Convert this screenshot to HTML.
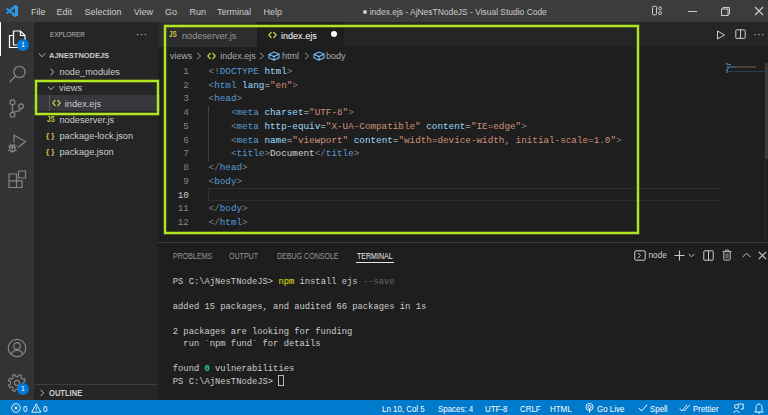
<!DOCTYPE html>
<html><head><meta charset="utf-8">
<style>
*{margin:0;padding:0;box-sizing:border-box}
html,body{width:768px;height:415px;overflow:hidden;background:#1e1e1e;font-family:"Liberation Sans",sans-serif;color:#cccccc}
.a{position:absolute;white-space:pre}
.m{font-family:"Liberation Mono",monospace}
#title{left:0;top:0;width:768px;height:22px;background:#3c3c3c}
#act{left:0;top:22px;width:34px;height:378px;background:#333333}
#side{left:34px;top:22px;width:124px;height:378px;background:#252526}
#tabs{left:158px;top:22px;width:610px;height:25px;background:#252526}
#status{left:0;top:400px;width:768px;height:15px;background:#007acc}
.menu{top:5.6px;height:13px;line-height:13px;font-size:9px;color:#cccccc}
.row{font-size:9.2px;height:16px;line-height:16px;color:#cccccc}
.code{font-size:9.31px;line-height:13.76px;height:13.76px;left:208.6px;color:#d4d4d4}
.ln{font-size:9.31px;line-height:13.76px;height:13.76px;left:164px;width:24.8px;text-align:right;color:#858585}
.t{color:#808080}.n{color:#569cd6}.at{color:#9cdcfe}.s{color:#ce9178}
.term{font-size:8.8px;line-height:12.5px;height:12.5px;left:172.8px;color:#cccccc}
.st{top:401.8px;height:14px;line-height:14px;font-size:8.8px;color:#ffffff;transform:scaleX(0.9);transform-origin:0 0}
.ptab{top:249.5px;height:13px;line-height:13px;font-size:8.2px;color:#969696;transform:scaleX(0.862);transform-origin:0 0}
.g{position:absolute;border:2px solid #aee622;box-shadow:0 0 0.8px 0.4px rgba(174,230,34,0.55),inset 0 0 0.8px 0.4px rgba(174,230,34,0.55)}
</style></head><body>
<div class="a" id="title"></div>
<div class="a" id="act"></div>
<div class="a" id="side"></div>
<div class="a" id="tabs"></div>

<!-- title bar -->
<svg class="a" style="left:6.3px;top:5px" width="12" height="12" viewBox="0 0 100 100">
<path fill="#2a8fd8" fill-rule="evenodd" d="M96.5 10.8L75.9 0.9C73.5-0.3 70.6 0.2 68.8 2.1L29.3 38.1L12.1 25.1C10.5 23.9 8.3 24 6.8 25.3L1.3 30.3C-0.5 32-0.5 34.8 1.3 36.5L16.2 50L1.3 63.6C-0.5 65.3-0.5 68.1 1.3 69.8L6.8 74.8C8.3 76.1 10.5 76.2 12.1 75L29.3 62L68.8 98C70.6 99.8 73.5 100.3 75.9 99.2L96.5 89.3C98.6 88.3 100 86.1 100 83.7V16.3C100 14 98.6 11.8 96.5 10.8ZM75 27.3L45.1 50L75 72.7Z"/>
<path fill="#3aa3f0" d="M75.9 0.9L96.5 10.8C98.6 11.8 100 14 100 16.3V83.7C100 86.1 98.6 88.3 96.5 89.3L75.9 99.2L75 72.7V27.3Z" opacity="0.6"/>
</svg>
<div class="a menu" style="left:31px">File</div>
<div class="a menu" style="left:56.5px">Edit</div>
<div class="a menu" style="left:84.5px">Selection</div>
<div class="a menu" style="left:133.7px">View</div>
<div class="a menu" style="left:165px">Go</div>
<div class="a menu" style="left:189.5px">Run</div>
<div class="a menu" style="left:217px">Terminal</div>
<div class="a menu" style="left:263.5px">Help</div>
<div class="a" style="left:362.6px;top:9.7px;width:4.4px;height:4.4px;border-radius:50%;background:#cccccc"></div>
<div class="a menu" style="left:369.7px;font-size:8.45px">index.ejs - AjNesTNodeJS - Visual Studio Code</div>
<!-- window controls -->
<svg class="a" style="left:651px;top:5px" width="13" height="11" viewBox="0 0 13 11" fill="none" stroke="#cccccc" stroke-width="1"><rect x="1.5" y="1.3" width="4" height="8.5" rx="1"/><circle cx="9.1" cy="3.4" r="1.5"/><circle cx="9.1" cy="8.1" r="1.5"/></svg>
<div class="a" style="left:688px;top:10.5px;width:9px;height:1px;background:#cccccc"></div>
<svg class="a" style="left:720px;top:6px" width="11" height="10" viewBox="0 0 11 10" fill="none" stroke="#cccccc" stroke-width="1">
<rect x="1.5" y="3" width="6.5" height="6.5"/><path d="M3 3V1.5H9.5V8H8"/></svg>
<svg class="a" style="left:754px;top:6px" width="10" height="10" viewBox="0 0 10 10" stroke="#cccccc" stroke-width="1.1">
<path d="M1 1L9 9M9 1L1 9"/></svg>

<!-- activity bar -->
<div class="a" style="left:0;top:22px;width:1px;height:34px;background:#ffffff"></div>
<svg class="a" style="left:8px;top:30px" width="20" height="20" viewBox="0 0 20 20" fill="none" stroke="#ffffff" stroke-width="1.2">
<path d="M5.5 5.5H1.5V17.5H11.5V15"/><path d="M5.5 1H12.5L17 5.5V15H5.5Z"/><path d="M12.5 1V5.5H17"/></svg>
<div class="a" style="left:17px;top:38.7px;width:12px;height:12px;border-radius:50%;background:#0078d4;color:#fff;font-size:7.5px;line-height:12px;text-align:center">1</div>
<svg class="a" style="left:7px;top:64px" width="21" height="21" viewBox="0 0 21 21" fill="none" stroke="#858585" stroke-width="1.3">
<circle cx="12.5" cy="8" r="5.6"/><path d="M8.5 12L2.4 18.4"/></svg>
<svg class="a" style="left:8px;top:97px" width="18" height="22" viewBox="0 0 18 22" fill="none" stroke="#858585" stroke-width="1.2">
<circle cx="4.5" cy="5.3" r="2.4"/><circle cx="13" cy="9.2" r="2.4"/><circle cx="4.5" cy="17.8" r="2.4"/>
<path d="M4.5 7.7V15.4"/><path d="M13 11.6C13 14 10 14.5 4.5 15.4"/></svg>
<svg class="a" style="left:7px;top:134px" width="20" height="20" viewBox="0 0 20 20" fill="none" stroke="#858585" stroke-width="1.2">
<path d="M7 8.5V1.2L18.5 7.5L11 13.5"/><ellipse cx="5.4" cy="14.6" rx="2.8" ry="3.3"/><path d="M2.6 13.5H8.2M5.4 12V18M1 12H2.6M1 16.5H2.6M8.2 12H9.8M8.2 16.5H9.8M3.2 10L4.2 11.2M7.6 10L6.6 11.2"/></svg>
<svg class="a" style="left:7.5px;top:169.5px" width="19" height="19" viewBox="0 0 19 19" fill="none" stroke="#858585" stroke-width="1.2">
<path d="M1 4H8.5V17.5H1ZM1 10.8H14V17.5H8.5M10.5 1H17.5V8H10.5Z"/></svg>
<svg class="a" style="left:7px;top:338px" width="20" height="20" viewBox="0 0 20 20" fill="none" stroke="#858585" stroke-width="1.2"><circle cx="10" cy="10" r="8.7"/><circle cx="10" cy="8" r="3.3"/><path d="M4.3 16.2C5 13.4 7.2 12.3 10 12.3C12.8 12.3 15 13.4 15.7 16.2"/></svg>
<svg class="a" style="left:6.8px;top:372.6px" width="20" height="20" viewBox="0 0 20 20" fill="none" stroke="#858585" stroke-width="1.15" stroke-linejoin="round"><path d="M16.41 11.07 L18.46 12.03 L17.42 14.55 L15.29 13.77 L13.77 15.29 L14.55 17.42 L12.03 18.46 L11.07 16.41 L8.93 16.41 L7.97 18.46 L5.45 17.42 L6.23 15.29 L4.71 13.77 L2.58 14.55 L1.54 12.03 L3.59 11.07 L3.59 8.93 L1.54 7.97 L2.58 5.45 L4.71 6.23 L6.23 4.71 L5.45 2.58 L7.97 1.54 L8.93 3.59 L11.07 3.59 L12.03 1.54 L14.55 2.58 L13.77 4.71 L15.29 6.23 L17.42 5.45 L18.46 7.97 L16.41 8.93Z"/><circle cx="10" cy="10" r="2.6"/></svg>
<div class="a" style="left:16.8px;top:382.8px;width:12px;height:12px;border-radius:50%;background:#0078d4;color:#fff;font-size:7.5px;line-height:12px;text-align:center">1</div>

<!-- sidebar -->
<div class="a" style="left:49.5px;top:29.2px;height:12px;line-height:12px;font-size:7.9px;color:#bbbbbb;transform:scaleX(0.81);transform-origin:0 0">EXPLORER</div>
<div class="a" style="left:136px;top:28.5px;font-size:10px;color:#cccccc;letter-spacing:0.5px">···</div>
<svg class="a" style="left:38px;top:51px" width="8" height="8" viewBox="0 0 8 8" fill="none" stroke="#cccccc" stroke-width="0.9"><path d="M0.8 2.5L4 5.7L7.2 2.5"/></svg>
<div class="a" style="left:48.8px;top:49.6px;height:12px;line-height:12px;font-size:8.1px;font-weight:bold;color:#cccccc;transform:scaleX(0.92);transform-origin:0 0">AJNESTNODEJS</div>
<svg class="a" style="left:47.5px;top:67.5px" width="8" height="8" viewBox="0 0 8 8" fill="none" stroke="#cccccc" stroke-width="0.9"><path d="M2.5 0.8L5.7 4L2.5 7.2"/></svg>
<div class="a row" style="left:59.6px;top:63.5px">node_modules</div>
<!-- views row -->
<div class="a" style="left:34px;top:95.3px;width:126px;height:16.2px;background:#37373d"></div>
<div class="a" style="left:49px;top:95.3px;width:1px;height:16.2px;background:#585858"></div>
<svg class="a" style="left:47px;top:83.6px" width="8" height="8" viewBox="0 0 8 8" fill="none" stroke="#cccccc" stroke-width="0.9"><path d="M0.8 2.5L4 5.7L7.2 2.5"/></svg>
<div class="a row" style="left:59.1px;top:80.1px">views</div>
<svg class="a" style="left:52px;top:99.3px" width="9" height="8" viewBox="0 0 9 8" fill="none" stroke="#cbcb41" stroke-width="1.15"><path d="M3.5 1L0.8 4L3.5 7M5.5 1L8.2 4L5.5 7"/></svg>
<div class="a row" style="left:64.8px;top:95.5px">index.ejs</div>
<div class="a" style="left:46.8px;top:115.7px;font-size:8.2px;font-weight:bold;color:#cbcb41;line-height:8px;transform:scaleX(0.78);transform-origin:0 0">JS</div>
<div class="a row" style="left:59.5px;top:111.8px">nodeserver.js</div>
<div class="a" style="left:46px;top:131.3px;font-size:8px;font-weight:bold;color:#cbcb41;line-height:10px;letter-spacing:2.2px">{}</div>
<div class="a row" style="left:59.5px;top:128px">package-lock.json</div>
<div class="a" style="left:46px;top:147.3px;font-size:8px;font-weight:bold;color:#cbcb41;line-height:10px;letter-spacing:2.2px">{}</div>
<div class="a row" style="left:59.5px;top:144px">package.json</div>
<div class="g" style="left:35px;top:79.5px;width:124px;height:35px"></div>
<!-- outline -->
<div class="a" style="left:34px;top:384px;width:124px;height:1px;background:#3c3c3c"></div>
<svg class="a" style="left:38px;top:388.5px" width="8" height="8" viewBox="0 0 8 8" fill="none" stroke="#cccccc" stroke-width="0.9"><path d="M2.5 0.8L5.7 4L2.5 7.2"/></svg>
<div class="a" style="left:49.2px;top:387.2px;height:12px;line-height:12px;font-size:8.5px;font-weight:bold;color:#cccccc;transform:scaleX(0.89);transform-origin:0 0">OUTLINE</div>

<!-- tabs -->
<div class="a" style="left:158px;top:22px;width:99px;height:25px;background:#2d2d2d"></div>
<div class="a" style="left:257px;top:22px;width:87px;height:25px;background:#1e1e1e"></div>
<div class="a" style="left:169px;top:31.3px;font-size:8.2px;font-weight:bold;color:#cbcb41;line-height:8px;transform:scaleX(0.78);transform-origin:0 0">JS</div>
<div class="a" style="left:182px;top:28.5px;height:14px;line-height:14px;font-size:9.15px;color:#969696">nodeserver.js</div>
<svg class="a" style="left:267.5px;top:30.5px" width="9" height="8" viewBox="0 0 9 8" fill="none" stroke="#cbcb41" stroke-width="1.3"><path d="M3.5 1L0.8 4L3.5 7M5.5 1L8.2 4L5.5 7"/></svg>
<div class="a" style="left:281px;top:28.5px;height:14px;line-height:14px;font-size:9.05px;color:#ffffff">index.ejs</div>
<div class="a" style="left:331px;top:31.3px;width:6.2px;height:6.2px;border-radius:50%;background:#ffffff"></div>
<!-- editor actions -->
<svg class="a" style="left:716px;top:29.5px" width="10" height="10" viewBox="0 0 10 10" fill="none" stroke="#cccccc" stroke-width="1"><path d="M1.5 1L8.5 5L1.5 9Z"/></svg>
<svg class="a" style="left:735px;top:29px" width="11" height="10" viewBox="0 0 11 10" fill="none" stroke="#cccccc" stroke-width="1"><rect x="0.8" y="0.8" width="9.4" height="8.6" rx="0.8"/><path d="M5.5 0.8V9.4"/></svg>
<div class="a" style="left:753.5px;top:28.5px;font-size:10px;color:#cccccc;letter-spacing:0.4px">···</div>

<!-- breadcrumbs -->
<div class="a" style="left:170px;top:49.5px;height:13px;line-height:13px;font-size:8.9px;color:#a9a9a9">views</div>
<svg class="a" style="left:196px;top:52px" width="6" height="8" viewBox="0 0 6 8" fill="none" stroke="#a9a9a9" stroke-width="0.9"><path d="M1 0.8L4.5 4L1 7.2"/></svg>
<svg class="a" style="left:207px;top:52px" width="9" height="8" viewBox="0 0 9 8" fill="none" stroke="#cbcb41" stroke-width="1.3"><path d="M3.5 1L0.8 4L3.5 7M5.5 1L8.2 4L5.5 7"/></svg>
<div class="a" style="left:220.2px;top:49.5px;height:13px;line-height:13px;font-size:9.05px;color:#a9a9a9">index.ejs</div>
<svg class="a" style="left:259px;top:52px" width="6" height="8" viewBox="0 0 6 8" fill="none" stroke="#a9a9a9" stroke-width="0.9"><path d="M1 0.8L4.5 4L1 7.2"/></svg>
<svg class="a" style="left:267.5px;top:51px" width="12" height="10" viewBox="0 0 12 10" fill="none" stroke="#75beff" stroke-width="1.1"><path d="M1 3.5L6 1L11 3L11 6.8L6 9.2L1 7Z M1 3.5L6 5.6L11 3 M6 5.6V9.2"/></svg>
<div class="a" style="left:282px;top:49.5px;height:13px;line-height:13px;font-size:9.05px;color:#a9a9a9">html</div>
<svg class="a" style="left:303.5px;top:52px" width="6" height="8" viewBox="0 0 6 8" fill="none" stroke="#a9a9a9" stroke-width="0.9"><path d="M1 0.8L4.5 4L1 7.2"/></svg>
<svg class="a" style="left:312.5px;top:51px" width="12" height="10" viewBox="0 0 12 10" fill="none" stroke="#75beff" stroke-width="1.1"><path d="M1 3.5L6 1L11 3L11 6.8L6 9.2L1 7Z M1 3.5L6 5.6L11 3 M6 5.6V9.2"/></svg>
<div class="a" style="left:326px;top:49.5px;height:13px;line-height:13px;font-size:9.05px;color:#a9a9a9">body</div>

<!-- code -->
<div class="a" style="left:208px;top:105.68px;width:1px;height:55px;background:#404040"></div>
<div class="a" style="left:208px;top:188.3px;width:513px;height:13px;border-top:1px solid #2e2e2e;border-bottom:1px solid #2e2e2e;border-left:1px solid #2e2e2e"></div>
<div class="a m ln" style="top:64.80px">1</div>
<div class="a m ln" style="top:78.56px">2</div>
<div class="a m ln" style="top:92.32px">3</div>
<div class="a m ln" style="top:106.08px">4</div>
<div class="a m ln" style="top:119.84px">5</div>
<div class="a m ln" style="top:133.60px">6</div>
<div class="a m ln" style="top:147.36px">7</div>
<div class="a m ln" style="top:161.12px">8</div>
<div class="a m ln" style="top:174.88px">9</div>
<div class="a m ln" style="top:188.64px;color:#c6c6c6">10</div>
<div class="a m ln" style="top:202.40px">11</div>
<div class="a m ln" style="top:216.16px">12</div>
<div class="a m code" style="top:64.80px"><span class="t">&lt;!</span><span class="n">DOCTYPE</span> <span class="at">html</span><span class="t">&gt;</span></div>
<div class="a m code" style="top:78.56px"><span class="t">&lt;</span><span class="n">html</span> <span class="at">lang</span>=<span class="s">"en"</span><span class="t">&gt;</span></div>
<div class="a m code" style="top:92.32px"><span class="t">&lt;</span><span class="n">head</span><span class="t">&gt;</span></div>
<div class="a m code" style="top:106.08px">    <span class="t">&lt;</span><span class="n">meta</span> <span class="at">charset</span>=<span class="s">"UTF-8"</span><span class="t">&gt;</span></div>
<div class="a m code" style="top:119.84px">    <span class="t">&lt;</span><span class="n">meta</span> <span class="at">http-equiv</span>=<span class="s">"X-UA-Compatible"</span> <span class="at">content</span>=<span class="s">"IE=edge"</span><span class="t">&gt;</span></div>
<div class="a m code" style="top:133.60px">    <span class="t">&lt;</span><span class="n">meta</span> <span class="at">name</span>=<span class="s">"viewport"</span> <span class="at">content</span>=<span class="s">"width=device-width, initial-scale=1.0"</span><span class="t">&gt;</span></div>
<div class="a m code" style="top:147.36px">    <span class="t">&lt;</span><span class="n">title</span><span class="t">&gt;</span>Document<span class="t">&lt;/</span><span class="n">title</span><span class="t">&gt;</span></div>
<div class="a m code" style="top:161.12px"><span class="t">&lt;/</span><span class="n">head</span><span class="t">&gt;</span></div>
<div class="a m code" style="top:174.88px"><span class="t">&lt;</span><span class="n">body</span><span class="t">&gt;</span></div>
<div class="a m code" style="top:202.40px"><span class="t">&lt;/</span><span class="n">body</span><span class="t">&gt;</span></div>
<div class="a m code" style="top:216.16px"><span class="t">&lt;/</span><span class="n">html</span><span class="t">&gt;</span></div>
<!-- minimap -->
<div class="a" style="left:726px;top:63.3px;width:2px;height:1.4px;background:#3a6a98"></div>
<div class="a" style="left:728px;top:63.5px;width:3px;height:1px;background:#5b7f9f"></div>
<div class="a" style="left:726.5px;top:65.5px;width:2px;height:3px;background:#355f88"></div>
<div class="a" style="left:728.5px;top:65.8px;width:7px;height:2px;background:#435261"></div>
<div class="a" style="left:735.5px;top:66.2px;width:20px;height:1.6px;background:#4d3c31"></div>
<div class="a" style="left:726px;top:69px;width:2px;height:4px;background:#355f88"></div>
<div class="a" style="left:728px;top:70.5px;width:37px;height:1.3px;background:#2a3e55"></div>
<div class="a" style="left:765px;top:63px;width:3px;height:96px;background:#3a3a3a"></div>
<div class="a" style="left:765px;top:159px;width:1px;height:83px;background:#2a2a2a"></div>
<div class="g" style="left:163.5px;top:24.5px;width:475px;height:209px"></div>

<!-- panel -->
<div class="a" style="left:158px;top:242px;width:610px;height:1px;background:#3d3d3d"></div>
<div class="a ptab" style="left:173px">PROBLEMS</div>
<div class="a ptab" style="left:229.4px">OUTPUT</div>
<div class="a ptab" style="left:276.6px">DEBUG CONSOLE</div>
<div class="a ptab" style="left:357px;color:#e7e7e7">TERMINAL</div>
<div class="a" style="left:356px;top:262px;width:38px;height:1px;background:#e7e7e7"></div>
<svg class="a" style="left:633.5px;top:249.5px" width="12" height="11" viewBox="0 0 12 11" fill="none" stroke="#cccccc" stroke-width="1"><rect x="0.8" y="0.8" width="10.4" height="9.4" rx="0.8"/><path d="M4 3L6.5 5.5L4 8"/></svg>
<div class="a" style="left:648.5px;top:249px;height:13px;line-height:13px;font-size:8.3px;color:#cccccc">node</div>
<svg class="a" style="left:673.5px;top:249.5px" width="11" height="11" viewBox="0 0 11 11" stroke="#cccccc" stroke-width="1.1"><path d="M5.5 0.5V10.5M0.5 5.5H10.5"/></svg>
<svg class="a" style="left:688px;top:253px" width="7" height="5" viewBox="0 0 7 5" fill="none" stroke="#cccccc" stroke-width="0.9"><path d="M0.7 1L3.5 3.8L6.3 1"/></svg>
<svg class="a" style="left:702.5px;top:249.5px" width="11" height="11" viewBox="0 0 11 11" fill="none" stroke="#cccccc" stroke-width="1"><rect x="0.8" y="0.8" width="9.4" height="9.4" rx="0.8"/><path d="M5.5 0.8V10.2"/></svg>
<svg class="a" style="left:721.5px;top:249px" width="10" height="12" viewBox="0 0 10 12" fill="none" stroke="#cccccc" stroke-width="0.9"><path d="M0.5 2.6H9.5M3.6 2.6V1H6.4V2.6M1.8 2.6V10.3C1.8 10.8 2.1 11.1 2.6 11.1H7.4C7.9 11.1 8.2 10.8 8.2 10.3V2.6"/><path d="M4.1 4.5V9.3M5.9 4.5V9.3" stroke-width="0.7"/></svg>
<svg class="a" style="left:741.5px;top:251.5px" width="9" height="6" viewBox="0 0 9 6" fill="none" stroke="#cccccc" stroke-width="1"><path d="M0.7 5L4.5 1.2L8.3 5"/></svg>
<svg class="a" style="left:757.5px;top:251px" width="9" height="9" viewBox="0 0 9 9" stroke="#cccccc" stroke-width="1.1"><path d="M0.8 0.8L8.2 8.2M8.2 0.8L0.8 8.2"/></svg>

<!-- terminal -->
<div class="a m term" style="top:275.80px">PS C:\AjNesTNodeJS&gt; <span style="color:#e5e510">npm</span> install ejs <span style="color:#666666">--save</span></div>
<div class="a m term" style="top:300.80px">added 15 packages, and audited 66 packages in 1s</div>
<div class="a m term" style="top:325.80px">2 packages are looking for funding</div>
<div class="a m term" style="top:338.30px">  run `npm fund` for details</div>
<div class="a m term" style="top:363.30px">found <span style="color:#23d18b;font-weight:bold">0</span> vulnerabilities</div>
<div class="a m term" style="top:375.80px">PS C:\AjNesTNodeJS&gt; </div>
<div class="a" style="left:278px;top:374.6px;width:5.5px;height:11.8px;border:1px solid #b8b8b8"></div>

<!-- status bar -->
<div class="a" id="status"></div>
<svg class="a" style="left:10.5px;top:403px" width="10" height="10" viewBox="0 0 10 10" fill="none" stroke="#ffffff" stroke-width="0.9"><circle cx="5" cy="5" r="4.3"/><path d="M3.3 3.3L6.7 6.7M6.7 3.3L3.3 6.7"/></svg>
<div class="a st" style="left:23px">0</div>
<svg class="a" style="left:30.5px;top:403px" width="10.5" height="10" viewBox="0 0 10.5 10" fill="none" stroke="#ffffff" stroke-width="0.9"><path d="M5.25 0.8L9.8 9.2H0.7Z M5.25 3.8V6.4 M5.25 7.3V8.1"/></svg>
<div class="a st" style="left:43px">0</div>
<div class="a st" style="left:381.7px">Ln 10, Col 5</div>
<div class="a st" style="left:438.2px">Spaces: 4</div>
<div class="a st" style="left:485.4px">UTF-8</div>
<div class="a st" style="left:520.3px">CRLF</div>
<div class="a st" style="left:550.4px">HTML</div>
<svg class="a" style="left:584.5px;top:403px" width="9" height="10" viewBox="0 0 9 10" fill="none" stroke="#ffffff" stroke-width="0.9"><circle cx="4.5" cy="4" r="3.6"/><circle cx="4.5" cy="4" r="1.6"/><path d="M4.5 5.6V9.8"/></svg>
<div class="a st" style="left:597.3px">Go Live</div>
<svg class="a" style="left:637.5px;top:404px" width="10" height="8" viewBox="0 0 10 8" fill="none" stroke="#ffffff" stroke-width="1"><path d="M0.8 4L3.5 7L9.2 0.8"/></svg>
<div class="a st" style="left:649.9px">Spell</div>
<svg class="a" style="left:679px;top:404px" width="12" height="8" viewBox="0 0 12 8" fill="none" stroke="#ffffff" stroke-width="0.9"><path d="M0.8 4.5L3 7L8 0.8M4.5 6L5.5 7L10.8 0.8"/></svg>
<div class="a st" style="left:692.9px">Prettier</div>
<svg class="a" style="left:733px;top:402.5px" width="11" height="11" viewBox="0 0 11 11" fill="none" stroke="#ffffff" stroke-width="0.9"><circle cx="3.5" cy="3.5" r="2"/><path d="M0.8 10C1 7 6 7 6.2 10M5 1H10.2V6H7.5"/></svg>
<svg class="a" style="left:754px;top:402.5px" width="10" height="11" viewBox="0 0 10 11" fill="none" stroke="#ffffff" stroke-width="0.9"><path d="M5 1C2.5 1 2 3 2 5V7.5L0.8 9H9.2L8 7.5V5C8 3 7.5 1 5 1ZM4 9.5C4 10.5 6 10.5 6 9.5"/></svg>
</body></html>
